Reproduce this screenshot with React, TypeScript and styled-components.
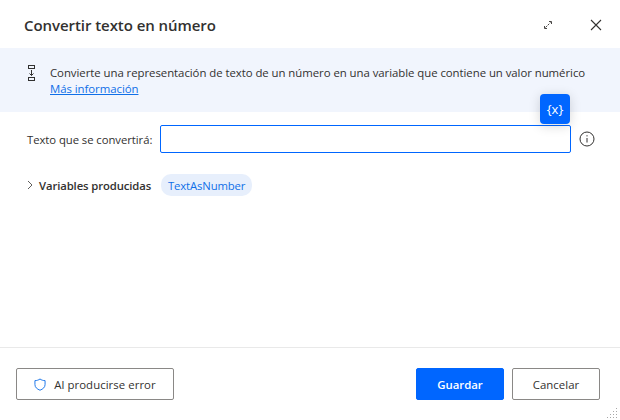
import React from "react";
import styled, { createGlobalStyle } from "styled-components";

const Global = createGlobalStyle`
  html, body { margin: 0; padding: 0; background: #fff; }
  body { font-family: "Open Sans", "Noto Sans", "Liberation Sans", sans-serif; color: #323130; }
  * { box-sizing: border-box; }
`;

const Dialog = styled.div`
  position: relative;
  width: 620px;
  height: 420px;
  display: flex;
  flex-direction: column;
  background: #fff;
  overflow: hidden;
`;

const Header = styled.header`
  height: 48px;
  flex: none;
  display: flex;
  align-items: center;
  padding: 2px 16px 0 24px;
`;

const Title = styled.h1`
  flex: 1;
  margin: 0;
  font-size: 15px;
  font-weight: 600;
  letter-spacing: -0.06px;
  color: #323130;
`;

const HeaderActions = styled.div`
  display: flex;
  align-items: center;
  gap: 32px;
`;

const IconButton = styled.button`
  width: 16px;
  height: 16px;
  padding: 0;
  display: flex;
  align-items: center;
  justify-content: center;
  border: none;
  background: none;
`;

const InfoBand = styled.section`
  height: 64px;
  flex: none;
  display: flex;
  align-items: flex-start;
  gap: 15px;
  padding: 17px 24px 0 28px;
  background: #f1f5fd;
  font-size: 11.4px;
  line-height: 16px;
  letter-spacing: -0.05px;
`;

const InfoText = styled.div`
  white-space: nowrap;
`;

const MoreLink = styled.a`
  display: block;
  color: #0f6fe8;
  text-decoration: underline;
`;

const Body = styled.main`
  flex: 1;
  display: flex;
  flex-direction: column;
  padding: 13px 16px 0 27px;
`;

const FieldRow = styled.div`
  display: flex;
  align-items: center;
`;

const FieldLabel = styled.label`
  width: 133px;
  flex: none;
  font-size: 11.3px;
  letter-spacing: -0.05px;
`;

const InputWrap = styled.div`
  position: relative;
  width: 411px;
  height: 28px;
  flex: none;
`;

const TextInput = styled.input`
  width: 100%;
  height: 100%;
  border: 1px solid #0066ff;
  border-radius: 2px;
  outline: none;
  background: #fff;
`;

const VariableButton = styled.button`
  position: absolute;
  right: 1px;
  top: -31px;
  width: 30px;
  height: 30px;
  padding: 0;
  border: none;
  border-radius: 4px;
  background: #0066ff;
  color: #fff;
  font-family: inherit;
  font-size: 13px;
  box-shadow: 0 2px 12px rgba(0, 0, 0, 0.16);
`;

const InfoIcon = styled.span`
  margin-left: 8px;
  display: flex;
`;

const OutputRow = styled.div`
  display: flex;
  align-items: center;
  margin-top: 21px;
  height: 22px;
`;

const Chevron = styled.span`
  width: 12px;
  display: flex;
`;

const OutputLabel = styled.span`
  width: 122px;
  flex: none;
  font-size: 11.3px;
  font-weight: 600;
  letter-spacing: -0.1px;
`;

const Chip = styled.span`
  height: 22px;
  padding: 0 7px;
  display: flex;
  align-items: center;
  border-radius: 10px;
  background: #e7effc;
  color: #0f6fe8;
  font-size: 11.3px;
  letter-spacing: -0.13px;
`;

const Footer = styled.footer`
  height: 73px;
  flex: none;
  display: flex;
  align-items: flex-start;
  gap: 8px;
  padding: 20px 20px 0 16px;
  border-top: 1px solid #e9e9e9;
`;

const Button = styled.button<{ $primary?: boolean; $w: number }>`
  width: ${(p) => p.$w}px;
  height: 32px;
  display: flex;
  align-items: center;
  justify-content: center;
  gap: 8px;
  padding: 0;
  border: 1px solid ${(p) => (p.$primary ? "#0066ff" : "#8a8886")};
  border-radius: 2px;
  background: ${(p) => (p.$primary ? "#0066ff" : "#fff")};
  color: ${(p) => (p.$primary ? "#fff" : "#323130")};
  font-family: inherit;
  font-size: 11.4px;
  font-weight: ${(p) => (p.$primary ? 600 : 500)};
  letter-spacing: ${(p) => (p.$primary ? "-0.05px" : "0.05px")};
`;

const Spacer = styled.div`
  flex: 1;
`;

const Grip = styled.svg`
  position: absolute;
  right: 1px;
  bottom: 1px;
`;

export default function App() {
  return (
    <Dialog>
      <Global />
      <Header>
        <Title>Convertir texto en número</Title>
        <HeaderActions>
          <IconButton aria-label="Expandir">
            <svg width="12" height="12" viewBox="0 0 12 12" fill="none" stroke="#484644" strokeWidth="1">
              <path d="M3.5 8.5 8.5 3.5" strokeDasharray="2 1" />
              <path d="M7 2.5h2.5V5M2.5 7v2.5H5" />
            </svg>
          </IconButton>
          <IconButton aria-label="Cerrar">
            <svg width="12" height="12" viewBox="0 0 12 12" fill="none" stroke="#323130" strokeWidth="1.1">
              <path d="M1 1l10 10M11 1 1 11" />
            </svg>
          </IconButton>
        </HeaderActions>
      </Header>

      <InfoBand>
        <svg width="7" height="16" viewBox="0 0 7 16" fill="none" stroke="#323130" strokeWidth="1">
          <rect x="0.5" y="0.5" width="6" height="3" />
          <rect x="0.5" y="12.5" width="6" height="3" />
          <path d="M3.5 5v5.5M1.5 8.5l2 2 2-2" />
        </svg>
        <InfoText>
          Convierte una representación de texto de un número en una variable que contiene un valor numérico
          <MoreLink href="#">Más información</MoreLink>
        </InfoText>
      </InfoBand>

      <Body>
        <FieldRow>
          <FieldLabel>Texto que se convertirá:</FieldLabel>
          <InputWrap>
            <TextInput />
            <VariableButton>{"{x}"}</VariableButton>
          </InputWrap>
          <InfoIcon>
            <svg width="16" height="16" viewBox="0 0 16 16" fill="none" stroke="#323130">
              <circle cx="8" cy="8" r="7" />
              <path d="M8 7v4.5" />
              <path d="M8 4.2v1.2" />
            </svg>
          </InfoIcon>
        </FieldRow>
        <OutputRow>
          <Chevron>
            <svg width="6" height="10" viewBox="0 0 6 10" fill="none" stroke="#605e5c">
              <path d="M1 1l4 4-4 4" />
            </svg>
          </Chevron>
          <OutputLabel>Variables producidas</OutputLabel>
          <Chip>TextAsNumber</Chip>
        </OutputRow>
      </Body>

      <Footer>
        <Button $w={158}>
          <svg width="12" height="13" viewBox="0 0 13 14" fill="none" stroke="#0f6fe8" strokeWidth="1">
            <path d="M6.5 1C8 2.2 10 2.8 12 2.8V7c0 3-2.2 4.9-5.5 6.2C3.2 11.9 1 10 1 7V2.8C3 2.8 5 2.2 6.5 1z" />
          </svg>
          Al producirse error
        </Button>
        <Spacer />
        <Button $primary $w={88}>Guardar</Button>
        <Button $w={88}>Cancelar</Button>
      </Footer>

      <Grip width="12" height="12" viewBox="0 0 12 12" fill="#a8a8a8">
        <rect x="9" y="1" width="1" height="1" />
        <rect x="6" y="4" width="1" height="1" />
        <rect x="9" y="4" width="1" height="1" />
        <rect x="3" y="7" width="1" height="1" />
        <rect x="6" y="7" width="1" height="1" />
        <rect x="9" y="7" width="1" height="1" />
        <rect x="0" y="10" width="1" height="1" />
        <rect x="3" y="10" width="1" height="1" />
        <rect x="6" y="10" width="1" height="1" />
        <rect x="9" y="10" width="1" height="1" />
      </Grip>
    </Dialog>
  );
}
